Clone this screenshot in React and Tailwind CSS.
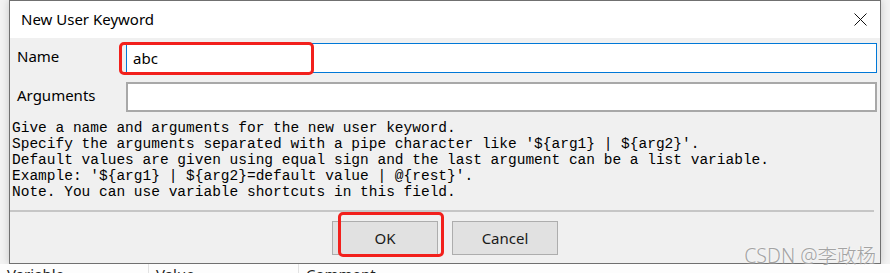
import React from 'react'

// Boîte de dialogue "New User Keyword" (style Windows), avec deux cadres rouges d'annotation.
const AIDE = [
  'Give a name and arguments for the new user keyword.',
  "Specify the arguments separated with a pipe character like '${arg1} | ${arg2}'.",
  'Default values are given using equal sign and the last argument can be a list variable.',
  "Example: '${arg1} | ${arg2}=default value | @{rest}'.",
  'Note. You can use variable shortcuts in this field.',
]

const ui = { fontFamily: '"Noto Sans", "Open Sans", Arial, sans-serif' }
const mono = { fontFamily: '"Liberation Mono", "Courier New", monospace' }

function Bouton({ children }) {
  return (
    <button
      type="button"
      className="w-[106px] h-[34px] bg-[#e1e1e1] border border-[#adadad] text-[15px] text-[#1a1a1a] flex items-center justify-center"
    >
      {children}
    </button>
  )
}

export default function App() {
  return (
    <div
      className="relative w-[890px] h-[273px] overflow-hidden bg-[#f2f2f2] flex flex-col text-black"
      style={ui}
    >
      <div className="px-[9px]">
        <div className="w-[872px] h-[264px] flex flex-col border border-[#707070] bg-[#f0f0f0] shadow-[0_0_8px_rgba(0,0,0,0.18)]">
          {/* barre de titre */}
          <div className="h-[37px] shrink-0 bg-white flex items-center justify-between pl-[11px] pr-[13px]">
            <span className="text-[15px] leading-none">New User Keyword</span>
            <svg width="13" height="13" viewBox="0 0 13 13" aria-hidden="true">
              <path d="M0.5 0.5 L12.5 12.5 M12.5 0.5 L0.5 12.5" stroke="#111" strokeWidth="1" fill="none" />
            </svg>
          </div>

          {/* contenu */}
          <div className="flex-1 flex flex-col pt-[5px]">
            <div className="flex items-center h-[30px] pl-[7px] pr-[3px]">
              <label htmlFor="nom" className="w-[109px] pb-[4px] text-[15px]">
                Name
              </label>
              <input
                id="nom"
                type="text"
                defaultValue="abc"
                className="flex-1 h-[30px] border border-[#0078d7] bg-white pl-[6px] text-[15px] outline-none"
                style={ui}
              />
            </div>

            <div className="flex items-center h-[30px] mt-[9px] pl-[7px] pr-[3px]">
              <label htmlFor="args" className="w-[109px] pb-[4px] text-[15px]">
                Arguments
              </label>
              <input
                id="args"
                type="text"
                className="flex-1 h-[30px] border-2 border-[#a8a8a8] bg-white pl-[6px] text-[15px] outline-none"
                style={ui}
              />
            </div>

            <div className="mt-[8px] pl-[2px] text-[14.5px] leading-[16px] whitespace-pre" style={mono}>
              {AIDE.map((ligne) => (
                <div key={ligne}>{ligne}</div>
              ))}
            </div>

            <div className="mt-[10px] h-[2px] mr-[6px] bg-[#c6c6c6]" />

            <div className="mt-[9px] flex justify-center gap-[14px]">
              <Bouton>OK</Bouton>
              <Bouton>Cancel</Bouton>
            </div>
          </div>
        </div>
      </div>

      {/* en-tête du tableau derrière la boîte (coupé par le bas de la capture) */}
      <div className="h-[9px] bg-[#fdfdfd] flex text-[15px] leading-[20px] text-[#222]">
        <div className="w-[149px] pl-[7px] border-r border-[#e3e3e3]">Variable</div>
        <div className="w-[150px] pl-[7px] border-r border-[#e3e3e3]">Value</div>
        <div className="pl-[7px]">Comment</div>
      </div>

      {/* annotations rouges */}
      <div className="absolute left-[119px] top-[42px] w-[195px] h-[33px] border-[3px] border-[#f2201c] rounded-[5px]" />
      <div className="absolute left-[338px] top-[212px] w-[106px] h-[45px] border-[3px] border-[#f2201c] rounded-[5px]" />

      {/* filigrane */}
      <div
        className="absolute right-[14px] top-[245px] text-[19.5px] leading-[22px] text-[#a3a3a3] font-light"
        style={{ fontFamily: '"Noto Sans", "Noto Sans CJK SC", sans-serif', textShadow: '0 0 2px #fff' }}
      >
        CSDN @李政杨
      </div>
    </div>
  )
}
